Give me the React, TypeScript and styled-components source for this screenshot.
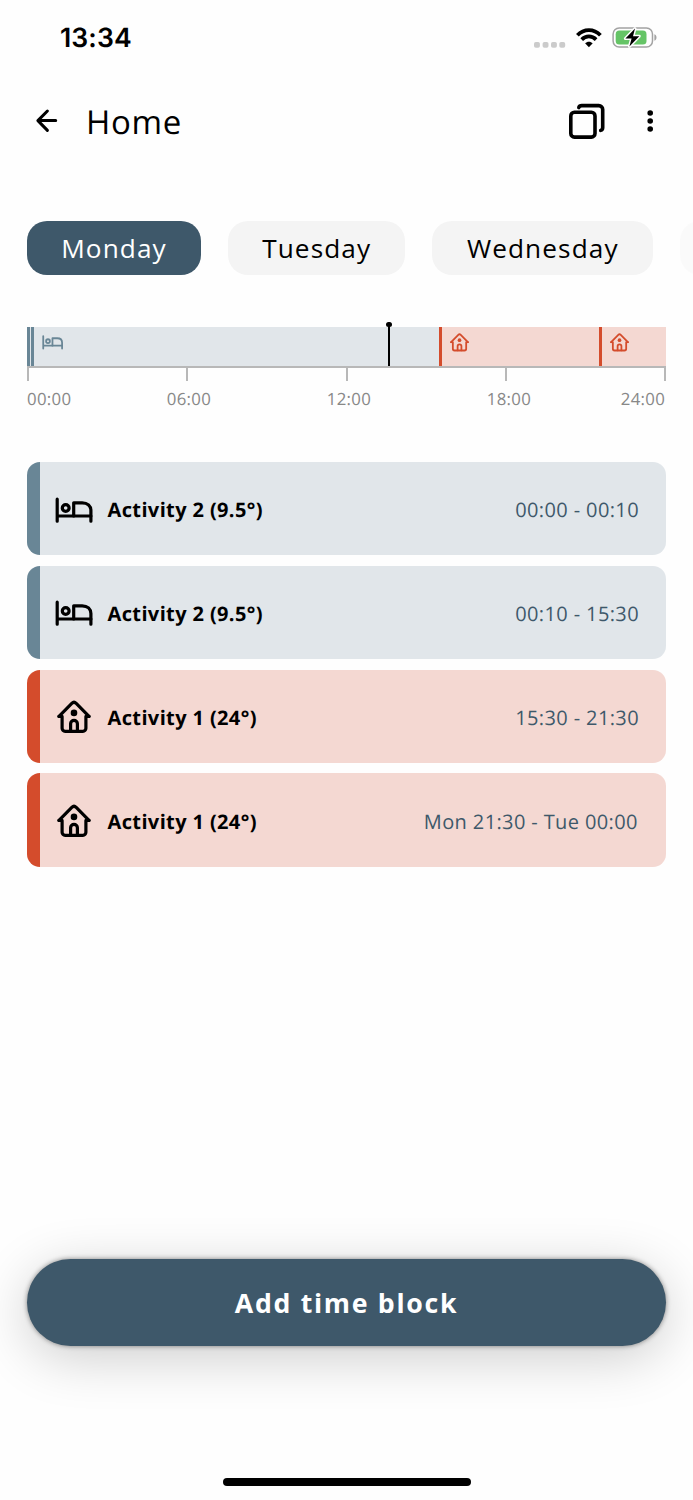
import React from "react";
import styled, { createGlobalStyle } from "styled-components";

const GlobalStyle = createGlobalStyle`
  *, *::before, *::after { box-sizing: border-box; }
  html, body { margin: 0; padding: 0; background: #fefefe; }
  body { font-family: "Open Sans", "Noto Sans", sans-serif; color: #000; text-rendering: geometricPrecision; }
  button { font: inherit; color: inherit; border: 0; background: none; padding: 0; margin: 0; }
  svg { display: block; flex: none; }
`;

const Screen = styled.div`
  display: flex;
  flex-direction: column;
  width: 693px;
  height: 1500px;
  overflow: hidden;
  background: #fefefe;
`;

const StatusBar = styled.div`
  display: flex;
  align-items: flex-start;
  justify-content: space-between;
  height: 83px;
  padding: 22px 35px 0 60px;
`;

const Clock = styled.span`
  font-family: Inter, "Liberation Sans", sans-serif;
  font-weight: 600;
  font-size: 26.6px;
  line-height: 32px;
  letter-spacing: 0.1px;
`;

const StatusIcons = styled.div`
  display: flex;
  align-items: center;
  padding-top: 4px;
`;

const Header = styled.header`
  display: flex;
  align-items: center;
  height: 76px;
  padding: 0 36px 0 35px;
`;

const Title = styled.h1`
  flex: 1;
  margin: 2px 0 0 27px;
  font-size: 33px;
  font-weight: 400;
  line-height: 44px;
  letter-spacing: 0.7px;
`;

const IconButton = styled.button<{ $gap?: number }>`
  display: flex;
  margin-left: ${(p) => p.$gap ?? 0}px;
`;

const Tabs = styled.nav`
  display: flex;
  gap: 27px;
  margin-top: 62px;
  padding-left: 27px;
  height: 54px;
  overflow: hidden;
`;

const Tab = styled.button<{ $width: number; $active?: boolean; $faded?: boolean }>`
  flex: none;
  width: ${(p) => p.$width}px;
  height: 53.5px;
  border-radius: 20px;
  background: ${(p) => (p.$active ? "#3e586a" : "#f4f4f4")};
  color: ${(p) => (p.$active ? "#fff" : "#000")};
  opacity: ${(p) => (p.$faded ? 0.35 : 1)};
  font-size: 26.2px;
  line-height: 54px;
  letter-spacing: 1.1px;
  text-align: center;
`;

const Timeline = styled.section`
  margin: 52.4px 27px 0;
`;

const Track = styled.div`
  position: relative;
  display: grid;
  grid-template-columns: 10fr 918fr 360fr 152fr;
  height: 38.8px;
`;

const Segment = styled.div<{ $accent: string; $fill: string }>`
  min-width: 0;
  overflow: hidden;
  background: linear-gradient(to right, ${(p) => p.$accent} 3.4px, ${(p) => p.$fill} 3.4px);
  color: ${(p) => p.$accent};
`;

const SegmentIcon = styled.div`
  display: flex;
  align-items: center;
  justify-content: center;
  width: 22px;
  height: 19px;
  margin: 5.6px 0 0 9.8px;
`;

const NowMarker = styled.div`
  position: absolute;
  left: 361px;
  top: -3px;
  bottom: 0;
  width: 2px;
  background: #000;

  &::before {
    content: "";
    position: absolute;
    left: -1.8px;
    top: -2.6px;
    width: 5.6px;
    height: 5.6px;
    border-radius: 50%;
    background: #000;
  }
`;

const Axis = styled.div`
  display: flex;
  height: 15px;
  border: 2px solid #b8b8b8;
  border-bottom: 0;
`;

const AxisStep = styled.div`
  flex: 1;
  & + & { border-left: 2px solid #b8b8b8; }
`;

const AxisLabels = styled.div`
  display: grid;
  grid-template-columns: 139.8px 160px 160px 134px auto;
  margin-top: 6px;
  color: #888;
  font-size: 16.8px;
  line-height: 24px;
  letter-spacing: 0.3px;
  white-space: nowrap;
`;

const BlockList = styled.main`
  display: flex;
  flex-direction: column;
  gap: 10.3px;
  margin: 50.8px 27px 0;
`;

const Block = styled.article<{ $accent: string; $fill: string }>`
  display: flex;
  align-items: center;
  height: 93.5px;
  padding-right: 27px;
  border-radius: 13px;
  overflow: hidden;
  background: linear-gradient(to right, ${(p) => p.$accent} 13.5px, ${(p) => p.$fill} 13.5px);
`;

const BlockIcon = styled.div`
  display: flex;
  justify-content: center;
  width: 40px;
  margin: 1.8px 0 0 26.8px;
`;

const BlockName = styled.span`
  flex: 1;
  margin: 3px 0 0 13.7px;
  font-size: 20px;
  font-weight: 700;
  line-height: 28px;
  letter-spacing: 0.38px;
`;

const BlockTime = styled.span<{ $spansDays: boolean }>`
  margin: 3px ${(p) => (p.$spansDays ? 1.2 : 0)}px 0 0;
  color: #3e586a;
  font-size: 20px;
  line-height: 28px;
  letter-spacing: 0.38px;
`;

const AddButton = styled.button`
  flex: none;
  height: 86.6px;
  margin: auto 27px 132px;
  padding-bottom: 1px;
  border-radius: 44px;
  background: #3e586a;
  color: #fff;
  font-size: 26.7px;
  font-weight: 700;
  letter-spacing: 1.7px;
  box-shadow: 0 0 5px rgba(0, 0, 0, 0.45), 0 11px 54px rgba(0, 0, 0, 0.2);
`;

const HomeIndicator = styled.div`
  flex: none;
  align-self: center;
  width: 248px;
  height: 8.6px;
  margin-bottom: 13.6px;
  border-radius: 5px;
  background: #000;
`;

function BedIcon({ scale = 1 }: { scale?: number }) {
  return (
    <svg width={38 * scale} height={26 * scale} viewBox="0 0 38 26" fill="none" stroke="currentColor" strokeWidth="3.2" strokeLinecap="round" strokeLinejoin="round">
      <path d="M2.2 2.2V24.2M2.2 19H35.9" />
      <circle cx="10.7" cy="11" r="3.4" />
      <path d="M18.7 19V5.8H27.2C32.5 5.8 35.9 9 35.9 13.6V24.2" />
    </svg>
  );
}

function HouseIcon({ scale = 1 }: { scale?: number }) {
  return (
    <svg width={34 * scale} height={34 * scale} viewBox="0 0 34 34" fill="none" stroke="currentColor" strokeWidth="3.2" strokeLinecap="round" strokeLinejoin="round">
      <path d="M2 16.4L14.8 3.4C16.2 2 17.8 2 19.2 3.4L32 16.4" />
      <path d="M2 16.4H5.1V28.3A3 3 0 0 0 8.1 31.3H25.9A3 3 0 0 0 28.9 28.3V16.4H32" />
      <path d="M13.6 31V23.8A3.4 3.4 0 0 1 20.4 23.8V31" />
      <circle cx="17" cy="12.9" r="3.3" fill="currentColor" stroke="none" />
    </svg>
  );
}

function StatusGlyphs() {
  return (
    <svg width="124" height="24" viewBox="534 26 124 24" fill="none">
      {[534, 542.6, 551, 559.3].map((x) => (
        <rect key={x} x={x} y="42" width="5.9" height="5.8" rx="1.8" fill="#cbcbcb" />
      ))}
      <path d="M577.4 35.2C583.9 28.3 593.9 28.3 600.4 35.2" stroke="#000" strokeWidth="3.8" />
      <path d="M581.7 39.6C585.8 35.4 592 35.4 596.1 39.6" stroke="#000" strokeWidth="3.7" />
      <path d="M585.1 43.3C587.2 41.2 590.6 41.2 592.7 43.3L588.9 47.3Z" fill="#000" />
      <rect x="613.1" y="28" width="39.4" height="19" rx="6" stroke="#a3a3a3" strokeWidth="1.5" />
      <path d="M654.4 34.2C657.2 35.3 657.2 39.7 654.4 40.8Z" fill="#a3a3a3" />
      <rect x="615.7" y="30.6" width="30.8" height="14" rx="3.6" fill="#65c466" />
      <path d="M635 28.6L625.4 38.6H631.6L629.4 46.4L639.3 36.2H633Z" fill="#000" stroke="#fefefe" strokeWidth="3" strokeLinejoin="round" />
      <path d="M635 28.6L625.4 38.6H631.6L629.4 46.4L639.3 36.2H633Z" fill="#000" />
    </svg>
  );
}

const palette = {
  cool: { accent: "#698696", fill: "#e1e6ea" },
  warm: { accent: "#d44c2c", fill: "#f4d8d2" },
};

const blocks = [
  { name: "Activity 2 (9.5°)", time: "00:00 - 00:10", minutes: 10, tone: palette.cool, Icon: BedIcon },
  { name: "Activity 2 (9.5°)", time: "00:10 - 15:30", minutes: 920, tone: palette.cool, Icon: BedIcon },
  { name: "Activity 1 (24°)", time: "15:30 - 21:30", minutes: 360, tone: palette.warm, Icon: HouseIcon },
  { name: "Activity 1 (24°)", time: "Mon 21:30 - Tue 00:00", minutes: 150, tone: palette.warm, Icon: HouseIcon },
];

export default function App() {
  return (
    <Screen>
      <GlobalStyle />
      <StatusBar>
        <Clock>13:34</Clock>
        <StatusIcons>
          <StatusGlyphs />
        </StatusIcons>
      </StatusBar>

      <Header>
        <IconButton aria-label="Back">
          <svg width="24" height="26" viewBox="35 108 24 26" fill="none" stroke="#000" strokeWidth="3" strokeLinecap="round" strokeLinejoin="round">
            <path d="M47.4 111L37.9 120.6L47.4 130.4M38.2 120.6H55.7" />
          </svg>
        </IconButton>
        <Title>Home</Title>
        <IconButton aria-label="Copy">
          <svg width="38" height="38" viewBox="568 102 38 38" fill="none" stroke="#000" strokeWidth="3.6" strokeLinecap="round">
            <rect x="570.8" y="112.3" width="24.2" height="24.8" rx="3.6" />
            <path d="M578.8 107.6C579.2 106.2 580.2 105.6 581.8 105.6H598.8A3.9 3.9 0 0 1 602.7 109.5V127.4C602.7 129 602 130 600.7 130.4" />
          </svg>
        </IconButton>
        <IconButton aria-label="More" $gap={37}>
          <svg width="14" height="24" viewBox="643 109 14 24" fill="#000">
            <circle cx="650.2" cy="113" r="2.8" />
            <circle cx="650.2" cy="121" r="2.8" />
            <circle cx="650.2" cy="129" r="2.8" />
          </svg>
        </IconButton>
      </Header>

      <Tabs>
        <Tab $width={174} $active>Monday</Tab>
        <Tab $width={177.4}>Tuesday</Tab>
        <Tab $width={220.8}>Wednesday</Tab>
        <Tab $width={186} $faded aria-label="Thursday" />
      </Tabs>

      <Timeline>
        <Track>
          {blocks.map(({ time, minutes, tone, Icon }) => (
            <Segment key={time} $accent={tone.accent} $fill={tone.fill}>
              {minutes > 60 && (
                <SegmentIcon>
                  <Icon scale={0.56} />
                </SegmentIcon>
              )}
            </Segment>
          ))}
          <NowMarker />
        </Track>
        <Axis>
          <AxisStep />
          <AxisStep />
          <AxisStep />
          <AxisStep />
        </Axis>
        <AxisLabels>
          <span>00:00</span>
          <span>06:00</span>
          <span>12:00</span>
          <span>18:00</span>
          <span>24:00</span>
        </AxisLabels>
      </Timeline>

      <BlockList>
        {blocks.map(({ name, time, tone, Icon }) => (
          <Block key={time} $accent={tone.accent} $fill={tone.fill}>
            <BlockIcon>
              <Icon />
            </BlockIcon>
            <BlockName>{name}</BlockName>
            <BlockTime $spansDays={time.includes("Tue")}>{time}</BlockTime>
          </Block>
        ))}
      </BlockList>

      <AddButton>Add time block</AddButton>
      <HomeIndicator />
    </Screen>
  );
}
